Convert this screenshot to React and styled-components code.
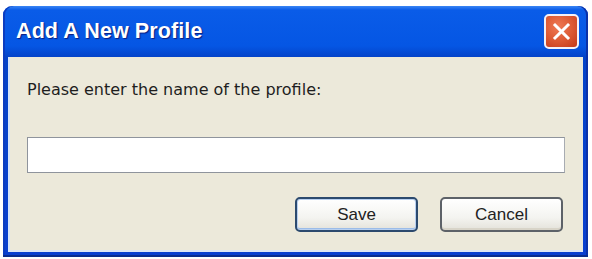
import React from "react";
import styled, { createGlobalStyle } from "styled-components";

const GlobalStyle = createGlobalStyle`
  html, body { margin: 0; padding: 0; background: #ffffff; }
  body { width: 592px; height: 259px; overflow: hidden; }
`;

const Page = styled.div`
  padding: 6px 0 0 3px;
`;

const Window = styled.div`
  width: 585px;
  height: 251px;
  box-sizing: border-box;
  display: flex;
  flex-direction: column;
  border-radius: 9px 9px 0 0;
  background: linear-gradient(to bottom, #3a86f4 0px, #0a5ce8 4px, #0556e4 40px, #0443c8 51px, #0a3fcf 100%);
  padding: 0 5px 5px 5px;
  box-shadow: inset 0 -2px 0 #0a2d8e, inset 2px 0 0 #0b3cc0, inset -2px 0 0 #0b31a8;
`;

const TitleBar = styled.div`
  height: 51px;
  display: flex;
  align-items: center;
  justify-content: space-between;
  padding: 0 4px 0 8px;
`;

const Title = styled.div`
  font-family: "Liberation Sans", Arial, sans-serif;
  font-weight: bold;
  font-size: 21.5px;
  color: #ffffff;
  text-shadow: 1px 1px 1px #0a1e80;
  letter-spacing: 0.1px;
`;

const CloseButton = styled.div`
  width: 35px;
  height: 35px;
  box-sizing: border-box;
  border: 2px solid #f4f0f6;
  border-radius: 5px;
  background: radial-gradient(circle at 40% 35%, #ef7a55 0%, #dd5a34 50%, #c2381a 100%);
  display: flex;
  align-items: center;
  justify-content: center;
`;

const Client = styled.div`
  flex: 1;
  background: #ece9da;
  box-shadow: inset 2px 0 0 #d6e4f8, inset 0 -2px 0 #dfe6f2;
  display: flex;
  flex-direction: column;
  padding: 23px 18px 20px 19px;
`;

const Label = styled.div`
  font-family: "DejaVu Sans", Verdana, sans-serif;
  font-size: 16px;
  color: #1e1e1e;
  letter-spacing: 0px;
  height: 19px;
  line-height: 19px;
`;

const TextInput = styled.input`
  margin-top: 38px;
  height: 36px;
  box-sizing: border-box;
  border: 1px solid #8f949c;
  border-right-color: #a8acb2;
  background: #ffffff;
  outline: none;
  padding: 0 6px;
`;

const ButtonRow = styled.div`
  margin-top: 24px;
  display: flex;
  justify-content: flex-end;
  gap: 22px;
  padding-right: 2px;
`;

const Button = styled.button`
  width: 123px;
  height: 35px;
  box-sizing: border-box;
  border: 2px solid ${(p) => (p.$default ? "#2c4a6e" : "#5d6268")};
  border-radius: 5px;
  background: linear-gradient(to bottom, #ffffff 0%, #f4f4f0 60%, #e4e2da 100%);
  box-shadow: ${(p) =>
    p.$default
      ? "inset 0 0 0 1px #b8d0f0, inset 0 -2px 0 #9cbce8"
      : "inset 0 -2px 0 #d8d4c8"};
  font-family: "Liberation Sans", Arial, sans-serif;
  font-size: 17px;
  color: #222222;
  padding: 0;
  display: flex;
  align-items: center;
  justify-content: center;
`;

function CloseIcon() {
  return (
    <svg width="19" height="19" viewBox="0 0 19 19">
      <path d="M3 3 L16 16 M16 3 L3 16" stroke="#ffffff" strokeWidth="3" strokeLinecap="square" />
    </svg>
  );
}

export default function App() {
  return (
    <>
      <GlobalStyle />
      <Page>
        <Window>
          <TitleBar>
            <Title>Add A New Profile</Title>
            <CloseButton>
              <CloseIcon />
            </CloseButton>
          </TitleBar>
          <Client>
            <Label>Please enter the name of the profile:</Label>
            <TextInput type="text" />
            <ButtonRow>
              <Button $default>Save</Button>
              <Button>Cancel</Button>
            </ButtonRow>
          </Client>
        </Window>
      </Page>
    </>
  );
}
